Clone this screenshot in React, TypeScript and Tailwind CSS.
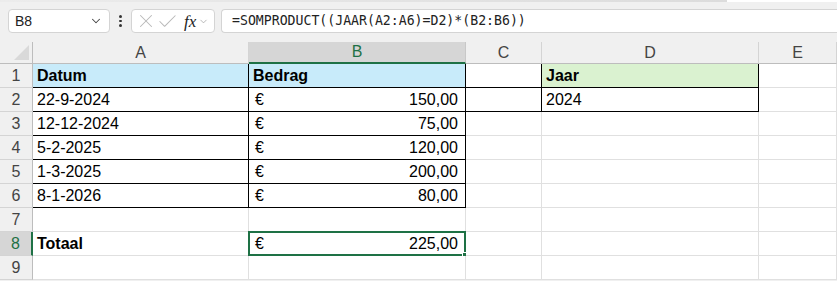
import { ChevronDown, X, Check } from 'lucide-react';

type CellData = {
  text?: string;
  euro?: boolean;
  bold?: boolean;
  fill?: 'blue' | 'green';
  black?: boolean;
};

type RowData = {
  n: number;
  A?: CellData;
  B?: CellData;
  C?: CellData;
  D?: CellData;
};

const rows: RowData[] = [
  {
    n: 1,
    A: { text: 'Datum', bold: true, fill: 'blue', black: true },
    B: { text: 'Bedrag', bold: true, fill: 'blue', black: true },
    C: { black: true },
    D: { text: 'Jaar', bold: true, fill: 'green', black: true },
  },
  {
    n: 2,
    A: { text: '22-9-2024', black: true },
    B: { text: '150,00', euro: true, black: true },
    C: { black: true },
    D: { text: '2024', black: true },
  },
  { n: 3, A: { text: '12-12-2024', black: true }, B: { text: '75,00', euro: true, black: true } },
  { n: 4, A: { text: '5-2-2025', black: true }, B: { text: '120,00', euro: true, black: true } },
  { n: 5, A: { text: '1-3-2025', black: true }, B: { text: '200,00', euro: true, black: true } },
  { n: 6, A: { text: '8-1-2026', black: true }, B: { text: '80,00', euro: true, black: true } },
  { n: 7 },
  { n: 8, A: { text: 'Totaal', bold: true }, B: { text: '225,00', euro: true } },
  { n: 9 },
];

function Cell({ data, selected }: { data?: CellData; selected?: boolean }) {
  const d = data || {};
  return (
    <div
      className={
        'relative flex items-center h-[24px] border-r border-b text-[16px] text-black ' +
        (d.black ? 'border-black ' : 'border-[#e0e0e0] ') +
        (d.fill === 'blue' ? 'bg-[#c8ebfa] ' : d.fill === 'green' ? 'bg-[#daf2d0] ' : 'bg-white ') +
        (d.bold ? 'font-bold ' : '')
      }
    >
      {d.euro ? (
        <div className="flex w-full justify-between pl-[6px] pr-[7px]">
          <span>€</span>
          <span>{d.text}</span>
        </div>
      ) : (
        d.text && <span className="pl-[4px]">{d.text}</span>
      )}
      {selected && (
        <div className="absolute -left-[1px] -top-[1px] -right-[1px] -bottom-[1px] border-2 border-[#1e7145]">
          <div className="absolute -right-[4px] -bottom-[4px] w-[6px] h-[6px] bg-[#1e7145] border border-white" />
        </div>
      )}
    </div>
  );
}

export default function App() {
  const cols = ['A', 'B', 'C', 'D', 'E'];
  return (
    <div
      className="w-[837px] h-[281px] overflow-hidden bg-[#f0f0f0] select-none"
      style={{ fontFamily: '"Liberation Sans", Arial, sans-serif' }}
    >
      {/* bovenrand */}
      <div className="flex h-[2px]">
        <div className="w-[727px] bg-gradient-to-r from-[#ececec] to-[#dcdcdc]" />
        <div className="flex-1 bg-white" />
      </div>

      {/* formulebalk */}
      <div className="flex items-start h-[40px] pt-[7px] pl-[8px]">
        <div className="flex items-center justify-between w-[102px] h-[24px] bg-white border border-[#d4d4d4] rounded-[4px] pl-[6px] pr-[6px]">
          <span className="text-[14px] text-[#222]">B8</span>
          <ChevronDown size={14} strokeWidth={1.8} className="text-[#444]" />
        </div>
        <div className="flex flex-col items-center justify-center gap-[2px] w-[21px] h-[24px]">
          <span className="w-[2.5px] h-[2.5px] rounded-full bg-[#333]" />
          <span className="w-[2.5px] h-[2.5px] rounded-full bg-[#333]" />
          <span className="w-[2.5px] h-[2.5px] rounded-full bg-[#333]" />
        </div>
        <div className="flex items-center w-[84px] h-[24px] bg-white border border-[#d4d4d4] rounded-[4px] pl-[3px]">
          <X size={22} strokeWidth={1.1} className="text-[#b8b8b8] shrink-0" />
          <Check size={23} strokeWidth={1.1} className="text-[#b8b8b8] -ml-[1px] shrink-0" />
          <span
            className="ml-[5px] text-[17px] italic text-[#222] leading-none"
            style={{ fontFamily: '"Liberation Serif", "Times New Roman", serif' }}
          >
            fx
          </span>
          <ChevronDown size={11} strokeWidth={1.5} className="text-[#999] ml-[2px] shrink-0" />
        </div>
        <div className="flex items-center flex-1 ml-[6px] h-[24px] bg-white border border-r-0 border-[#d4d4d4] rounded-l-[4px] pl-[10px]">
          <span
            className="text-[13.2px] text-[#222]"
            style={{ fontFamily: '"DejaVu Sans Mono", "Liberation Mono", monospace' }}
          >
            =SOMPRODUCT((JAAR(A2:A6)=D2)*(B2:B6))
          </span>
        </div>
      </div>

      {/* werkblad */}
      <div className="grid grid-cols-[33px_216px_217px_76px_217px_78px]">
        {/* kolomkoppen */}
        <div className="relative h-[22px] border-r border-b border-[#bdbdbd]">
          <div className="absolute right-[3px] bottom-[3px] w-0 h-0 border-l-[15px] border-l-transparent border-b-[15px] border-b-[#d9d9d9]" />
        </div>
        {cols.map((c) => (
          <div
            key={c}
            className={
              'flex items-center justify-center h-[22px] text-[16px] ' +
              (c === 'B'
                ? 'bg-[#d6d6d6] text-[#1e7145] border-b-2 border-b-[#1e7145] border-r border-r-[#c8c8c8]'
                : 'text-[#444] border-b border-b-[#bdbdbd] border-r border-r-[#d4d4d4]')
            }
          >
            {c}
          </div>
        ))}

        {rows.map((r) => (
          <div key={r.n} className="contents">
            <div
              className={
                'flex items-center justify-center h-[24px] border-b border-b-[#d4d4d4] text-[16px] ' +
                (r.n === 8
                  ? 'bg-[#d6d6d6] text-[#1e7145] border-r-2 border-r-[#1e7145]'
                  : 'text-[#444] border-r border-r-[#bdbdbd]')
              }
            >
              {r.n}
            </div>
            <Cell data={r.A} />
            <Cell data={r.B} selected={r.n === 8} />
            <Cell data={r.C} />
            <Cell data={r.D} />
            <Cell />
          </div>
        ))}
      </div>
    </div>
  );
}
